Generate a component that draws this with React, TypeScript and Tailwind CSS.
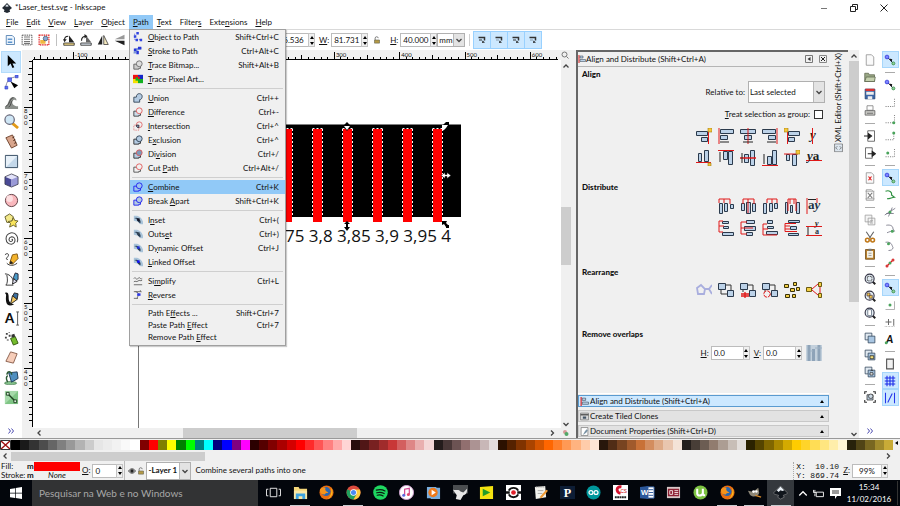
import type { ReactNode } from 'react';

type IconProps = { children: ReactNode; size?: string; box?: number };

function Svg({ children, size = 'size-4', box = 16 }: IconProps) {
  return (
    <svg viewBox={`0 0 ${box} ${box}`} className={`${size} shrink-0`} fill="none" aria-hidden="true">
      {children}
    </svg>
  );
}

// "_File" underlines the F
function Mnemonic({ text }: { text: string }) {
  const i = text.indexOf('_');
  if (i < 0) return <>{text}</>;
  return (
    <>
      {text.slice(0, i)}
      <span className="underline">{text[i + 1]}</span>
      {text.slice(i + 2)}
    </>
  );
}

function Chevron({ d, className = 'size-2' }: { d: string; className?: string }) {
  return (
    <svg viewBox="0 0 8 8" className={className} fill="none" stroke="#444" strokeWidth="1.3" aria-hidden="true">
      <path d={d} />
    </svg>
  );
}

const UP = 'M1.5 5.5 4 3l2.5 2.5';
const DOWN = 'M1.5 3 4 5.5 6.5 3';
const LEFT = 'M5.5 1.5 3 4l2.5 2.5';
const RIGHT = 'M3 1.5 5.5 4 3 6.5';

/* ---------- menu ---------- */

type MenuEntry = { label: string; keys?: string; icon?: ReactNode; active?: boolean; short?: boolean } | null;

const overlap = (a: string, b: string, fa: string, fb: string) => (
  <>
    <path d="M1 5h5v-1h3v6H7v1H1z" fill={fa} stroke={a} />
    <circle cx="7.5" cy="4.5" r="3.5" fill={fb} stroke={b} />
  </>
);

const offset = (accent: string) => (
  <>
    <path d="M1 1h4c4 1 6 4 7 7v3H9L6 8 1 7z" fill="#a9c4da" />
    <path d="M2 4c3 0 5 2 6 6" stroke="#57708a" />
    <path d="m3 3 3 1 3 3v3L6 8 5 6z" fill="#2a3c50" />
    <path d="M5 4h3v3H5z" fill={accent} />
  </>
);

const pathMenu: MenuEntry[] = [
  {
    label: '_Object to Path',
    keys: 'Shift+Ctrl+C',
    icon: (
      <>
        <path d="M2 2v7h7" stroke="#6b7ad0" strokeDasharray="2 1" />
        <path d="M4 0h3v3H4zM1 4h3v3H1zM3 8h3v3H3zM8 8h3v3H8z" fill="#3044e0" />
      </>
    ),
  },
  {
    label: '_Stroke to Path',
    keys: 'Ctrl+Alt+C',
    icon: (
      <>
        <path d="M2 9c0-4 3-6 8-6" stroke="#7b95d8" strokeWidth="3" />
        <path d="M1 3h3v3H1zM6 1h4v3H6zM4 6h3v4H4z" fill="#2534d8" />
      </>
    ),
  },
  { label: '_Trace Bitmap...', keys: 'Shift+Alt+B', icon: overlap('#555', '#666', '#ccc', '#ddd') },
  {
    label: '_Trace Pixel Art...',
    icon: (
      <>
        <path d="M0 1h6v5H0z" fill="#f01010" />
        <path d="M6 1h6v5H6z" fill="#1526c8" />
        <path d="M0 6h6v5H0z" fill="#f5e000" />
        <path d="M6 6h6v5H6z" fill="#12b020" />
        <path d="M3 4h3v4H3z" fill="#12b020" />
        <path d="M6 3h2v3H6z" fill="#f01010" />
      </>
    ),
  },
  null,
  {
    label: '_Union',
    keys: 'Ctrl++',
    icon: <path d="M1 5h3c0-6 7-5 7-1 0 2-1 4-3 4v3H1z" fill="#b4cbe2" stroke="#26384c" />,
  },
  { label: '_Difference', keys: 'Ctrl+-', icon: overlap('#333', '#e05050', '#cddcea', '#f0f0f0') },
  {
    label: '_Intersection',
    keys: 'Ctrl+^',
    icon: (
      <>
        <path d="M1 5h6v6H1z" stroke="#e06060" strokeDasharray="1 1" />
        <circle cx="7.5" cy="4.5" r="3.5" stroke="#e06060" />
        <path d="M4 5h3v3c-2 0-3-1-3-3z" fill="#8da9c4" stroke="#223" />
      </>
    ),
  },
  { label: 'E_xclusion', keys: 'Ctrl+^', icon: overlap('#222', '#26384c', '#b4cbe2', '#b4cbe2') },
  { label: 'Di_vision', keys: 'Ctrl+/', icon: overlap('#222', '#e05050', '#b4cbe2', '#7f9ab8') },
  { label: 'Cut _Path', keys: 'Ctrl+Alt+/', icon: overlap('#444', '#e05050', 'none', '#f0f0f0') },
  null,
  { label: '_Combine', keys: 'Ctrl+K', active: true, icon: overlap('#1414f0', '#1414f0', '#9cc4ee', '#9cc4ee') },
  { label: 'Break _Apart', keys: 'Shift+Ctrl+K', icon: overlap('#1414f0', '#1414f0', '#b4cbe2', '#b4cbe2') },
  null,
  { label: 'I_nset', keys: 'Ctrl+(', icon: offset('#112') },
  { label: 'Outs_et', keys: 'Ctrl+)', icon: offset('#345') },
  { label: 'D_ynamic Offset', keys: 'Ctrl+J', icon: offset('#2030e0') },
  { label: '_Linked Offset', icon: offset('#1010ff') },
  null,
  {
    label: 'Si_mplify',
    keys: 'Ctrl+L',
    icon: <path d="M1 3c2-3 3 3 5 0s3 2 5 0M1 7c2-2 3 1 5-1s3 1 5-1M1 10.500h10" stroke="#555" />,
  },
  {
    label: '_Reverse',
    icon: (
      <>
        <path d="M1 2h9L8 0M3 2c6 2 3 4 2 8M1 10h5" stroke="#555" />
        <path d="M5 4h4v3H5z" fill="#2a35e8" />
      </>
    ),
  },
  null,
  { label: 'Path E_ffects ...', keys: 'Shift+Ctrl+7', short: true },
  { label: 'Paste Path _Effect', keys: 'Ctrl+7', short: true },
  { label: 'Remove Path _Effect', short: true },
];

function PathMenu() {
  return (
    <div
      role="menu"
      className="absolute left-0 top-full z-10 w-[157px] border border-[#a0a0a0] bg-[#f0f0f0] pb-0.5 shadow-[1px_1px_1px_#0003]"
    >
      {pathMenu.map((m, i) =>
        m === null ? (
          <div key={i} role="separator" className="flex h-[5px] items-center px-0.5">
            <div className="h-px w-full bg-[#cfcfcf]" />
          </div>
        ) : (
          <button
            key={i}
            role="menuitem"
            className={`flex w-full items-center pl-[3px] pr-1.5 text-left ${m.short ? 'h-3' : 'h-[14px]'} ${
              m.active ? 'bg-[#91c9f7]' : ''
            }`}
          >
            <span className="w-[15px] shrink-0">
              {m.icon && (
                <Svg size="size-[10px]" box={12}>
                  {m.icon}
                </Svg>
              )}
            </span>
            <span className="flex-1">
              <Mnemonic text={m.label} />
            </span>
            <span>{m.keys}</span>
          </button>
        ),
      )}
    </div>
  );
}

const menus = ['_File', '_Edit', '_View', '_Layer', '_Object', '_Path', '_Text', 'Filter_s', 'Exte_nsions', '_Help'];

function MenuBar() {
  return (
    <nav className="flex h-[14px] shrink-0 pl-0.5">
      {menus.map((m) => (
        <div key={m} className="relative">
          <button className={`h-full px-1 ${m === '_Path' ? 'bg-[#91c9f7]' : ''}`}>
            <Mnemonic text={m} />
          </button>
          {m === '_Path' && <PathMenu />}
        </div>
      ))}
    </nav>
  );
}

/* ---------- tool controls ---------- */

function Spin({ label, value, width }: { label: string; value: string; width: string }) {
  return (
    <label className="flex items-center gap-0.5">
      <span>
        <Mnemonic text={label} />
      </span>
      <span className={`flex h-[14px] ${width}`}>
        <input
          defaultValue={value}
          className="h-full w-0 min-w-0 flex-1 border border-r-0 border-[#bcbcbc] bg-white pl-0.5 outline-none"
        />
        <span className="flex w-[7px] flex-col border border-[#c4c4c4] bg-[#f0f0f0]">
          <button aria-label="Increase" className="flex flex-1 items-center justify-center">
            <svg viewBox="0 0 4 3" className="h-[3px] w-1"><path d="M0 3 2 0l2 3z" /></svg>
          </button>
          <button aria-label="Decrease" className="flex flex-1 items-center justify-center">
            <svg viewBox="0 0 4 3" className="h-[3px] w-1"><path d="M0 0h4L2 3z" /></svg>
          </button>
        </span>
      </span>
    </label>
  );
}

function Combo({ label, value, className }: { label: string; value: string; className: string }) {
  return (
    <span className={`flex border border-[#b0b0b0] bg-white ${className}`}>
      <select aria-label={label} className="min-w-0 flex-1 appearance-none pl-px outline-none">
        <option>{value}</option>
      </select>
      <span className="flex w-[11px] items-center justify-center border-l border-[#b8b8b8] bg-[#e3e3e3]">
        <Chevron d={DOWN} />
      </span>
    </span>
  );
}

const padlock = (
  <>
    <path d="M5 8V5c0-3 5-3 5 0" stroke="#777" strokeWidth="1.500" />
    <path d="M4 8h8v5H4z" fill="#b59a45" stroke="#665" />
  </>
);

const controlIcons: { name: string; art: ReactNode }[] = [
  {
    name: 'Select all',
    art: (
      <>
        <path d="M3 2h8l3 3v9H3z" fill="#eef5fc" stroke="#3a6ea5" />
        <path d="M5 6h6v2H5zM5 10h6v2H5z" fill="#5b93cc" />
      </>
    ),
  },
  {
    name: 'Select all in all layers',
    art: (
      <>
        <path d="M1.500 1.500h13v13h-13z" stroke="#222" strokeDasharray="2 1" />
        <path d="M4 4h8M4 7h8M4 10h8M4 12.500h8" stroke="#777" strokeWidth="1.500" />
      </>
    ),
  },
  {
    name: 'Deselect',
    art: (
      <>
        <path d="M1.500 1.500h13v13h-13z" stroke="#e02020" strokeWidth="1.500" strokeDasharray="2 1" />
        <path d="M3 8h7v5H3z" fill="#f0b840" />
        <circle cx="10" cy="6" r="3" fill="#88a8d8" stroke="#456" />
      </>
    ),
  },
];

const rotateIcons: { name: string; art: ReactNode }[] = [
  {
    name: 'Rotate left',
    art: (
      <>
        <path d="M8 2v9h7z" fill="#222" />
        <path d="M1 12h14v3H1z" fill="#f2d98a" stroke="#222" />
        <path d="M2 8c0-3 2-5 5-5" stroke="#222" strokeWidth="1.500" />
        <path d="m0 7 5 0-3 4z" fill="#222" />
      </>
    ),
  },
  {
    name: 'Rotate right',
    art: (
      <>
        <path d="M8 2v9h7z" fill="#666" />
        <path d="M1 12h14v3H1z" fill="#d4dce4" stroke="#222" />
        <path d="M2 9c0-4 2-6 6-6" stroke="#222" strokeWidth="1.500" />
        <path d="m6 0 4 3-4 3z" fill="#222" />
      </>
    ),
  },
  {
    name: 'Flip horizontal',
    art: (
      <>
        <path d="M7 2v12H1z" fill="#222" />
        <path d="M9 2v12h6z" fill="#f5e9c0" stroke="#333" />
      </>
    ),
  },
  {
    name: 'Flip vertical',
    art: (
      <>
        <path d="M14 1v6H1z" fill="#999" />
        <path d="M14 15V9H1z" fill="#222" />
      </>
    ),
  },
];

function ControlsBar() {
  return (
    <div className="flex h-[21px] shrink-0 items-center border-t border-[#d9d9d9]">
      <div className="flex w-[269px] shrink-0 items-center gap-[5px] pl-1">
        {controlIcons.map((c) => (
          <button key={c.name} aria-label={c.name}>
            <Svg size="size-3">{c.art}</Svg>
          </button>
        ))}
        <div className="mx-px h-3 w-px bg-[#c0c0c0]" />
        {rotateIcons.map((c) => (
          <button key={c.name} aria-label={c.name}>
            <Svg size="size-3">{c.art}</Svg>
          </button>
        ))}
      </div>
      <Spin label="" value="276.536" width="w-11" />
      <div className="w-1" />
      <Spin label="_W:" value="81.731" width="w-[37px]" />
      <button aria-label="Lock ratio" className="ml-1 mr-2">
        <Svg size="size-2.5">{padlock}</Svg>
      </button>
      <Spin label="_H:" value="40.000" width="w-[37px]" />
      <Combo label="Units" value="mm" className="h-[14px] w-7" />
      <div className="mx-1 h-3 w-px bg-[#d0d0d0]" />
      <div className="flex">
        {['stroke width', 'rounded corners', 'gradients', 'patterns'].map((t, i) => (
          <button
            key={t}
            aria-label={`Scale ${t}`}
            className="-ml-px flex h-[18px] w-[18px] items-center justify-center border border-[#99d1ff] bg-[#cce8ff]"
          >
            <Svg size="size-2">
              <path d="M1 3h12v6" stroke="#333" strokeWidth="3" />
              <path d="M2 8h6" stroke={i % 2 ? '#89a' : '#333'} strokeWidth="2" />
              <path d="m8 14 6-1-5-4z" fill="#222" />
            </Svg>
          </button>
        ))}
      </div>
    </div>
  );
}

/* ---------- toolbox ---------- */

const tools: { name: string; art: ReactNode }[] = [
  { name: 'Select', art: <path d="M4 1v12l3-3 2 5 2-1-2-4h4z" fill="#000" /> },
  {
    name: 'Edit paths',
    art: (
      <>
        <path d="M2 14C2 7 6 2 14 2" stroke="#889" />
        <path d="M1 12h3v3H1zM4 3h4v4H4zM12 0h3v3h-3z" fill="#5c6cf0" stroke="#2233c0" strokeWidth=".6" />
        <path d="m7 7 8 4-4 3z" fill="#000" />
      </>
    ),
  },
  {
    name: 'Tweak',
    art: (
      <>
        <path d="M1 15v-3c4 0 3-9 8-10 3 0 5 2 4 4-2-2-5 0-4 3 1 2 3 3 6 3v3z" fill="#8b8f8b" />
        <path d="M2 12c4-1 4-9 8-9M5 13c3-2 2-6 4-7" stroke="#444" />
      </>
    ),
  },
  {
    name: 'Zoom',
    art: (
      <>
        <path d="m9 10 6 5" stroke="#e29a18" strokeWidth="3" />
        <circle cx="6" cy="6" r="5" fill="#cfe6f5" stroke="#667" strokeWidth="1.300" />
      </>
    ),
  },
  {
    name: 'Measure',
    art: (
      <>
        <path d="m2 4 7-3 5 11-6 3z" fill="#d8a58c" stroke="#70442f" />
        <path d="m9 4 2-1M10 7l2-1M11 10l2-1" stroke="#402010" />
      </>
    ),
  },
  {
    name: 'Rectangle',
    art: (
      <>
        <path d="M1.500 1.500h13v13h-13z" fill="#c4d8ea" stroke="#334a60" />
        <path d="M2 2h12L2 14z" fill="#e8f1f9" />
      </>
    ),
  },
  {
    name: '3D box',
    art: (
      <>
        <path d="m1 4 7-3 7 3-7 4z" fill="#e3e3fa" />
        <path d="m1 4 7 3v8l-7-3z" fill="#4a4a96" />
        <path d="m8 7 7-3v8l-7 3z" fill="#9a9ad8" />
        <path d="m1 4 7-3 7 3v8l-7 3-7-3z" stroke="#334" strokeWidth=".8" />
      </>
    ),
  },
  {
    name: 'Ellipse',
    art: (
      <>
        <circle cx="8" cy="8" r="6.500" fill="#f9b8bd" stroke="#5c3a3f" />
        <circle cx="6" cy="6" r="3.500" fill="#fddfe1" />
      </>
    ),
  },
  {
    name: 'Star',
    art: (
      <>
        <path d="m1 4 5-3 4 3-2 6H3z" fill="#f3e98a" stroke="#66602c" />
        <path d="m10 5 1.500 3 3.500.5-2.500 2.500.5 4-3-2-4 2 1-4-2.500-2 4-.5z" fill="#f8e45c" stroke="#66602c" />
      </>
    ),
  },
  {
    name: 'Spiral',
    art: (
      <path
        d="M8 8c1-1 2 1 0 2-3 1-4-4 0-5 5 0 5 7 0 8-7 0-8-10-1-12 6-1 9 5 7 10"
        stroke="#444"
        strokeWidth="1.100"
      />
    ),
  },
  {
    name: 'Pencil',
    art: (
      <>
        <path d="M1 3c3-3 5 0 3 2s-2 3 0 3M3 12c3 3 7 3 11 0" stroke="#333" />
        <path d="m6 12 3-9 5-1 1 5-6 6z" fill="#f3b32c" stroke="#805510" />
        <path d="m6 13 1-4 3 3z" fill="#222" />
      </>
    ),
  },
  {
    name: 'Bezier',
    art: (
      <>
        <path d="M1 2c4 0 8 3 9 8M3 3c1 5 1 9-1 11h8" stroke="#333" />
        <path d="m10 6 2-5 3 1v6l-3 2z" fill="#4b9bc8" stroke="#223" />
        <path d="m9 13 1-6 4 3z" fill="#dde" stroke="#222" />
      </>
    ),
  },
  {
    name: 'Calligraphy',
    art: (
      <>
        <path d="M1 2c4-2 4 3 4 6s2 6 6 6c-6 3-9 1-9-6 0-3 1-4-1-6z" fill="#111" />
        <path d="m9 6 2-4 4 1-1 6z" fill="#3c6f9e" stroke="#222" />
        <path d="m7 14 2-9 5 4z" fill="#f1c760" stroke="#222" />
      </>
    ),
  },
  {
    name: 'Text',
    art: (
      <>
        <path d="M14.500 1v14M13 1h3M13 15h3" stroke="#555" />
        <text x="1" y="13" fontSize="14" fontWeight="900" fontFamily="Lato" fill="#111">
          A
        </text>
      </>
    ),
  },
  {
    name: 'Spray',
    art: (
      <>
        <path d="M2 2h2v2H2zM5 4h2v2H5zM1 6h2v2H1zM5 1h1v1H5zM3 9h2v1H3z" fill="#444" />
        <path d="m7 8 5-2 3 7-5 2z" fill="#74bc2c" stroke="#335a10" />
        <path d="m8 4 3-1 1 3-4 1z" fill="#333" />
      </>
    ),
  },
  { name: 'Eraser', art: <path d="m2 12 5-10 7 2-4 10z" fill="#f6cdb9" stroke="#8a5f4d" /> },
  {
    name: 'Paint bucket',
    art: (
      <>
        <ellipse cx="7" cy="14" rx="6.500" ry="1.800" fill="#83c08a" stroke="#2d6636" strokeWidth=".6" />
        <path d="m5 3 9-1 1 7-7 4z" fill="#4f8fc0" stroke="#1d3a55" />
        <path d="M4 6c-3 2-1 5 0 7M3 5c1-5 6-3 5 0" stroke="#2d5a36" strokeWidth="1.500" />
      </>
    ),
  },
  {
    name: 'Connector',
    art: (
      <>
        <path d="M1 1h14v14H1z" fill="#7fc585" />
        <path d="M1 1h14L1 15z" fill="#a5d9a9" />
        <path d="M4 4 12 12" stroke="#1b3f1e" strokeWidth="1.500" />
        <path d="M2.500 2.500h3v3h-3zM10.500 10.500h3v3h-3z" fill="#dcefdd" stroke="#1b3f1e" />
      </>
    ),
  },
];

function More() {
  return (
    <button aria-label="More">
      <svg viewBox="0 0 6 6" className="size-1.5" fill="none" stroke="#4a4ab0">
        <path d="m.5.5 2 2.500-2 2.500M3.500.5l2 2.500-2 2.500" />
      </svg>
    </button>
  );
}

function Toolbox() {
  return (
    <aside className="flex w-[22px] shrink-0 flex-col items-center bg-white pt-px">
      <div className="flex h-[356px] flex-col">
        {tools.map((t, i) => (
          <button
            key={t.name}
            aria-label={t.name}
            className={`flex min-h-0 w-5 flex-1 items-center justify-center ${
              i === 0 ? 'border border-[#b4dcfb] bg-[#cce8ff]' : ''
            }`}
          >
            <Svg size="size-[15px]">{t.art}</Svg>
          </button>
        ))}
      </div>
      <div className="mb-1 mt-auto flex">
        <More />
      </div>
    </aside>
  );
}

/* ---------- rulers and canvas ---------- */

const STEP = 0.653; // px per mm at 99%

function HorizontalRuler() {
  const ticks = Array.from({ length: 81 }, (_, i) => -160 + i * 10);
  return (
    <svg className="h-[10px] min-w-0 flex-1" aria-hidden="true">
      <path d="M0 9.500h525" stroke="#000" />
      {ticks.map((v) => {
        const x = Math.round(105 + v * STEP) + 0.5;
        const h = v % 100 === 0 ? 7 : v % 50 === 0 ? 4 : 2;
        return x < 525 && <path key={v} d={`M${x} 9V${9 - h}`} stroke="#000" />;
      })}
      {[-100, 300, 400, 500, 600].map((v) => (
        <text key={v} x={107 + v * STEP} y="7" fontSize="6" fill="#111">
          {v}
        </text>
      ))}
    </svg>
  );
}

function VerticalRuler() {
  const ticks = Array.from({ length: 57 }, (_, i) => 870 - i * 10);
  return (
    <svg className="w-[11px] shrink-0" aria-hidden="true">
      <path d="M10.500 0v367" stroke="#000" />
      {ticks.map((v) => {
        const y = Math.round(47 + (800 - v) * STEP) + 0.5;
        const w = v % 100 === 0 ? 8 : v % 50 === 0 ? 4 : 3;
        return y < 367 && <path key={v} d={`M10 ${y}h${-w}`} stroke="#000" />;
      })}
      {[800, 700, 600, 500, 400].map((v) =>
        String(v)
          .split('')
          .map((c, i) => (
            <text key={`${v}-${i}`} x="2" y={53 + (800 - v) * STEP + i * 6} fontSize="6" fill="#111">
              {c}
            </text>
          )),
      )}
    </svg>
  );
}

const bars = [220, 250, 280, 310, 340, 370, 400];

function Canvas() {
  return (
    <svg className="min-w-0 flex-1 bg-white" role="img" aria-label="Drawing">
      <path d="M105.500 0v400" stroke="#777" />
      <path d="M150 64.500h278V157H150z" fill="#000" />
      {bars.map((x) => (
        <g key={x}>
          <path d={`M${x} 69h9v93h-9z`} fill="#f00" />
          <path d={`M${x - 0.5} 68.500h10M${x - 0.5} 69v88M${x + 9.5} 69v88`} stroke="#fff" strokeDasharray="2 2" />
        </g>
      ))}
      <text x="252" y="182" fontSize="17" fill="#111" fontFamily="Open Sans, sans-serif">
        75 3,8 3,85 3,9 3,95 4
      </text>
      {/* selection handles */}
      <path d="m314 62 3 3h-2v2h2l-3 4-3-4h2v-2h-2z" fill="#000" />
      <path d="M311 66h6l-3 4z" fill="#fff" />
      <path d="m410 65 3-3h3v3l-3 2z" fill="#000" />
      <path d="M409 71v-6l6 0-2 3-2 2z" fill="#fff" />
      <path d="m408 115.500 4-3v2h2v-2l4 3-4 3v-2h-2v2z" fill="#fff" stroke="#000" strokeWidth=".5" />
      <path d="m314 161 3 3h-2v3h2l-3 4-3-4h2v-3h-2z" fill="#000" />
      <path d="M409 161h5l-1 2 2 2h1v3h-3v-1l-2-3-2 1z" fill="#000" />
    </svg>
  );
}

function Desk() {
  return (
    <main className="flex min-w-0 flex-1 flex-col">
      <div className="flex h-[10px] shrink-0">
        <div className="w-[11px]" />
        <HorizontalRuler />
        <button aria-label="Zoom on resize" className="w-[10px]">
          <Svg size="size-2">
            <circle cx="7" cy="7" r="5" stroke="#777" strokeWidth="2" />
            <path d="m11 11 4 4" stroke="#777" strokeWidth="2" />
          </Svg>
        </button>
      </div>
      <div className="flex min-h-0 flex-1">
        <VerticalRuler />
        <Canvas />
        <div className="flex w-[10px] flex-col items-center pt-0.5">
          <Chevron d={UP} />
          <div className="h-[137px]" />
          <div className="h-[58px] w-full bg-[#cdcdcd]" />
          <div className="flex-1" />
          <Chevron d={DOWN} />
        </div>
      </div>
      <div className="flex h-[10px] shrink-0 items-center pl-[13px]">
        <Chevron d={LEFT} />
        <div className="flex h-full flex-1 pl-[140px]">
          <div className="h-full w-[174px] bg-[#cdcdcd]" />
        </div>
        <Chevron d={RIGHT} />
        <button aria-label="Color managed view" className="ml-1.5 mr-px">
          <Svg size="size-2">
            <circle cx="6" cy="6" r="4" fill="#d89a9a" />
            <circle cx="9" cy="10" r="4" fill="#54a868" />
          </Svg>
        </button>
      </div>
    </main>
  );
}

/* ---------- dock ---------- */

const bar = { fill: '#bcd2e8', stroke: '#2b3a4c' };
const red = '#e01818';
const anchor = <path d="M12 0h4v4h-4z" fill="#f6c73a" stroke="#a07a10" strokeWidth=".6" />;

const alignIcons: { name: string; art: ReactNode }[] = [
  { name: 'Align right edges to left of anchor', art: <><path d="M.5 3.500h11v4H.5zM5.500 9.500h6v4h-6z" {...bar} /><path d="M12.500 4v12" stroke={red} />{anchor}</> },
  { name: 'Align left edges', art: <><path d="M2.500 1.500h13v4h-13zM2.500 7.500h7v4h-7z" {...bar} /><path d="M1 0v16" stroke={red} /><path d="M2 14h9" stroke="#222" /></> },
  { name: 'Center on vertical axis', art: <><path d="M.5 1.500h15v4H.5zM4.500 7.500h7v4h-7z" {...bar} /><path d="M8 0v16" stroke={red} /><path d="M3 14h10" stroke="#222" /></> },
  { name: 'Align right sides', art: <><path d="M.5 1.500h13v4H.5zM6.500 7.500h7v4h-7z" {...bar} /><path d="M15 0v16" stroke={red} /><path d="M5 14h9" stroke="#222" /></> },
  { name: 'Align left edges to right of anchor', art: <><path d="M4.500 3.500h11v4h-11zM4.500 9.500h6v4h-6z" {...bar} /><path d="M3.500 4v12" stroke={red} /><path d="M0 0h4v4H0z" fill="#f6c73a" stroke="#a07a10" strokeWidth=".6" /></> },
  { name: 'Align baseline anchors vertically', art: <><text x="4" y="11" fontSize="13" fontStyle="italic" fontWeight="700" fontFamily="Liberation Serif" fill="#222">y</text><path d="M6.500 0v16" stroke={red} /></> },
  { name: 'Align bottom edges to top of anchor', art: <><path d="M2.500 3.500h3v8h-3zM8.500.5h4v11h-4z" {...bar} /><path d="M0 12.500h15" stroke={red} /><path d="M12 13h3v3h-3z" fill="#f6c73a" stroke="#a07a10" strokeWidth=".6" /></> },
  { name: 'Align top edges', art: <><path d="M5.500 1.500h4v8h-4zM10.500 1.500h4v13h-4z" {...bar} /><path d="M0 .5h16" stroke={red} /><path d="M2 2v10" stroke="#222" /></> },
  { name: 'Center on horizontal axis', art: <><path d="M4.500 4.500h4v8h-4zM10.500.5h4v15h-4z" {...bar} /><path d="M0 8h16" stroke={red} strokeWidth="1.500" /><path d="M2 3v10" stroke="#222" /></> },
  { name: 'Align bottom edges', art: <><path d="M5.500 6.500h4v8h-4zM10.500.5h4v14h-4z" {...bar} /><path d="M0 15.500h16" stroke={red} /><path d="M2 4v10" stroke="#222" /></> },
  { name: 'Align top edges to bottom of anchor', art: <><path d="M2.500 4.500h3v6h-3zM8.500 4.500h4v11h-4z" {...bar} /><path d="M0 4h14" stroke={red} />{anchor}</> },
  { name: 'Align baselines', art: <><path d="M0 10.500h16" stroke={red} /><text x="1" y="10" fontSize="13" fontWeight="700" fontFamily="Liberation Serif" fill="#222"><tspan fontStyle="italic">y</tspan>a</text></> },
];

const distIcons: { name: string; art: ReactNode }[] = [
  { name: 'Distribute left edges', art: <><path d="M1.500 5.500h3v10h-3zM6.500 5.500h3v8h-3zM12.500 6.500h3v4h-3z" {...bar} /><path d="M1 5V1h11v5M6 1v4" stroke={red} /></> },
  { name: 'Distribute centers horizontally', art: <><path d="M1.500 5.500h3v7h-3zM6.500 4.500h4v11h-4zM12.500 5.500h3v8h-3z" {...bar} /><path d="M3 6V1h11v5M8 1v14" stroke={red} /></> },
  { name: 'Distribute right edges', art: <><path d="M1.500 5.500h3v10h-3zM7.500 5.500h3v8h-3zM12.500 5.500h3v5h-3z" {...bar} /><path d="M5 5V1h10v4M10 1v4" stroke={red} /></> },
  { name: 'Make horizontal gaps equal', art: <><path d="M1.500 4.500h2v11h-2zM6.500 7.500h2v7h-2zM12.500 4.500h3v11h-3z" {...bar} /><path d="M4 1v12M6 1v5M10 1v5M12 1v12M4 1h8" stroke={red} /></> },
  { name: 'Distribute baseline anchors horizontally', art: <><text x="2" y="11" fontSize="13" fontWeight="700" fontFamily="Liberation Serif" fill="#234">a<tspan fontStyle="italic">y</tspan></text><path d="M1 0v16M11 0v5" stroke={red} /><path d="M2 1.500h8" stroke="#222" /></> },
  { name: 'Distribute top edges', art: <><path d="M4.500 1.500h6v2h-6zM5.500 6.500h5v2h-5zM4.500 12.500h11v3h-11z" {...bar} /><path d="M5 1H1v11h4M1 6h5" stroke={red} /></> },
  { name: 'Distribute centers vertically', art: <><path d="M6.500.5h8v3h-8zM4.500 6.500h11v4h-11zM6.500 12.500h6v3h-6z" {...bar} /><path d="M7 2H1v12h6M1 8h12" stroke={red} /></> },
  { name: 'Distribute bottom edges', art: <><path d="M5.500.5h5v3h-5zM5.500 6.500h6v2h-6zM4.500 11.500h11v3h-11z" {...bar} /><path d="M5 4H1v11h14M1 9h5" stroke={red} /></> },
  { name: 'Make vertical gaps equal', art: <><path d="M4.500.5h11v2h-11zM6.500 6.500h6v3h-6zM4.500 13.500h10v2h-10z" {...bar} /><path d="M12 3.500H1v8h12M1 6h5M1 9h5" stroke={red} /></> },
  { name: 'Distribute baselines vertically', art: <><path d="M0 6.500h16M0 15.500h16" stroke={red} /><path d="M2 7v8" stroke="#222" /><text x="9" y="6" fontSize="8" fontStyle="italic" fontWeight="700" fontFamily="Liberation Serif" fill="#222">y</text><text x="9" y="14" fontSize="8" fontWeight="700" fontFamily="Liberation Serif" fill="#234">a</text></> },
];

const swap = (
  <>
    <path d="M.5 1.500h7v6h-7zM9.500 8.500h6v6h-6z" {...bar} />
    <path d="M8 3h5v5M3 8v4h6" stroke="#333" />
  </>
);

const rearrangeIcons: { name: string; art: ReactNode }[] = [
  { name: 'Arrange connector network', art: <path d="m1 6 4-3 4 4-1 5H2zM9 7h4l3-4M13 7l3 5" stroke="#a9aede" strokeWidth="1.800" /> },
  { name: 'Exchange positions', art: swap },
  { name: 'Exchange in stacking order', art: <>{swap}<path d="M1 10h8v6H1z" fill="#f0f0f0" /><path d="M1 12h8M1 14h8M5 10v6" stroke={red} strokeWidth="1.300" /></> },
  { name: 'Exchange around center', art: <>{swap}<circle cx="5" cy="12" r="3.200" fill="#f0f0f0" stroke={red} strokeDasharray="4 1" /></> },
  { name: 'Randomize centers', art: <g fill="#f3cf45" stroke="#3a3208"><path d="M.5 2.500h4v3h-4zM9.500.5h3v3h-3zM6.500 6.500h4v3h-4zM12.500 5.500h3v3h-3zM1.500 12.500h4v3h-4zM8.500 12.500h3v3h-3z" /></g> },
  { name: 'Unclump objects', art: <><path d="m6 7 6-5M6 8l6 5M14 4v7" stroke={red} /><g fill="#f3cf45" stroke="#6b5b10"><path d="M.5 5.500h5v4h-5zM12.500.5h3v4h-3zM12.500 11.500h3v4h-3z" /></g></> },
];

function IconGrid({ items, cols }: { items: { name: string; art: ReactNode }[]; cols: string }) {
  return (
    <div className={`ml-auto mr-[7px] grid w-fit gap-1.5 ${cols}`}>
      {items.map((it) => (
        <button key={it.name} aria-label={it.name}>
          <Svg>{it.art}</Svg>
        </button>
      ))}
    </div>
  );
}

const alignGlyph = (
  <>
    <path d="M2 0v16" stroke={red} strokeWidth="2" />
    <path d="M4 2h6v4H4zM4 9h11v4H4z" {...bar} />
  </>
);

function DockTab({ text, art, active }: { text: string; art: ReactNode; active?: boolean }) {
  return (
    <button
      className={`flex h-3 w-full items-center gap-px border pl-px pr-1 text-left ${
        active ? 'border-[#5a9bd0] bg-[#cce8ff]' : 'border-[#c8c8c8] bg-[#e2e2e2]'
      }`}
    >
      <Svg size="size-[9px]">{art}</Svg>
      <span className="flex-1">{text}</span>
      <svg viewBox="0 0 4 3" className="h-[3px] w-1"><path d="M0 3 2 0l2 3z" /></svg>
    </button>
  );
}

function Dock() {
  return (
    <section className="flex w-[253px] shrink-0 flex-col border-l-2 border-t-2 border-[#666]">
      <header className="flex h-[15px] shrink-0 items-center border-b border-[#b5b5b5] pr-0.5">
        <Svg size="size-2">{alignGlyph}</Svg>
        <span className="flex-1">Align and Distribute (Shift+Ctrl+A)</span>
        <button aria-label="Iconify" className="mr-1.5 size-2">
          <Svg size="size-2" box={8}>
            <path d="M.5.5h7v7h-7z" stroke="#777" />
            <path d="M5.500 2v4l-3-2z" fill="#333" />
          </Svg>
        </button>
        <button aria-label="Close" className="size-2">
          <Svg size="size-2" box={8}>
            <path d="M.5.5h7v7h-7z" stroke="#888" />
            <path d="m2 2 4 4M6 2 2 6" stroke="#222" />
          </Svg>
        </button>
      </header>
      <div className="flex-1">
        <h2 className="mt-0.5 pl-1 font-black">Align</h2>
        <div className="mr-1 mt-px flex items-center justify-end gap-[3px]">
          <span>Relative to:</span>
          <Combo label="Relative to" value="Last selected" className="h-[22px] w-[77px]" />
        </div>
        <label className="mr-1.5 mt-[5px] flex h-3 items-center justify-end gap-1">
          <span>
            <Mnemonic text="_Treat selection as group:" />
          </span>
          <input type="checkbox" className="size-[9px] appearance-none border border-[#333] bg-white" />
        </label>
        <div className="h-2" />
        <IconGrid items={alignIcons} cols="grid-cols-6" />
        <h2 className="mt-4 pl-1 font-black">Distribute</h2>
        <div className="h-[5px]" />
        <IconGrid items={distIcons} cols="grid-cols-5" />
        <h2 className="mt-[31px] pl-1 font-black">Rearrange</h2>
        <div className="h-1" />
        <IconGrid items={rearrangeIcons} cols="grid-cols-6" />
        <h2 className="mt-[31px] pl-1 font-black">Remove overlaps</h2>
        <div className="mr-[7px] mt-[5px] flex items-center justify-end gap-1">
          <Spin label="_H:" value="0.0" width="w-[39px]" />
          <Spin label="_V:" value="0.0" width="w-[39px]" />
          <button aria-label="Remove overlaps">
            <Svg>
              <path d="M0 0h16v16H0z" fill="#c3d0dc" />
              <path d="M3 0v16M7.500 4v12M13 0v16" stroke="#8ea3b8" strokeWidth="3" />
              <path d="M4 6h3M9 3h7" stroke="#9fb2c4" />
            </Svg>
          </button>
        </div>
      </div>
      <div className="flex flex-col gap-[3px] border-t border-white pb-px pt-px">
        <DockTab active text="Align and Distribute (Shift+Ctrl+A)" art={alignGlyph} />
        <DockTab
          text="Create Tiled Clones"
          art={
            <>
              <path d="M1 2h14v12H1z" fill="#ddd" stroke="#555" />
              <path d="M1 5h14" stroke="#333" strokeWidth="2" />
              <path d="M5 8h6v4H5z" fill="#456" />
            </>
          }
        />
        <DockTab
          text="Document Properties (Shift+Ctrl+D)"
          art={
            <>
              <path d="M2 1h12v14H2z" fill="#fff" stroke="#555" />
              <path d="m5 14 4-7 3-3 2 2-3 4z" fill="#7a93a5" />
            </>
          }
        />
      </div>
    </section>
  );
}

function DockSide() {
  return (
    <>
      <div className="w-[19px] shrink-0 border-t-2 border-[#666] pt-px">
        <button className="flex w-full rotate-180 items-center gap-px [writing-mode:vertical-rl]">
          <Svg size="size-[9px]">
            <path d="M1 1h14v14H1z" fill="#dde6ee" stroke="#444" />
            <path d="m6 5-3 3 3 3M10 5l3 3-3 3" stroke="#333" />
          </Svg>
          <span>XML Editor (Shift+Ctrl+X)</span>
        </button>
      </div>
      <div className="flex w-[11px] shrink-0 flex-col items-center pt-0.5">
        <Chevron d={UP} />
        <div className="mt-px h-[241px] w-[10px] bg-[#cdcdcd]" />
        <div className="flex-1" />
        <Chevron d={DOWN} />
      </div>
    </>
  );
}

/* ---------- command and snap bars ---------- */

const page = <path d="M3 1h7l3 3v11H3z" fill="#fafafa" stroke="#8a8a8a" />;
const lens = (
  <>
    <path d="m11 11 4 4" stroke="#222" strokeWidth="2.500" />
    <circle cx="7.500" cy="7.500" r="6" fill="#e4edf4" stroke="#334" strokeWidth="1.500" />
  </>
);
const stack = (
  <>
    <path d="M1.500 1.500h9v9h-9z" fill="#dfe8f0" stroke="#2d4257" />
    <path d="M5.500 5.500h9v9h-9z" fill="#a9c6e2" stroke="#2d4257" />
  </>
);

type BarItem = { name: string; art: ReactNode; on?: boolean } | null;

const commands: BarItem[] = [
  { name: 'New', art: page },
  { name: 'Open', art: <><path d="M1 3h5l1 2h7v9H1z" fill="#9aa886" stroke="#5c664d" /><path d="m1 14 2-6h12l-1 6z" fill="#c4d0ae" stroke="#5c664d" /></> },
  { name: 'Save', art: <><path d="M1.500 1.500h13v13h-13z" fill="#3a66a8" stroke="#24406e" /><path d="M2 1h12v3H2z" fill="#d83030" /><path d="M3 5h10v4H3zM5 11h6v4H5z" fill="#eee" /></> },
  { name: 'Print', art: <><path d="M4 1h8v6H4z" fill="#fff" stroke="#777" /><path d="M1.500 7.500h13v6h-13z" fill="#c8c8c4" stroke="#555" /><path d="M4 11h8" stroke="#555" /></> },
  null,
  { name: 'Import', art: <><path d="M5 1h9v14H5z" fill="#fff" stroke="#444" /><path d="M0 8h8M6 5l4 3-4 3z" fill="#222" stroke="#222" strokeWidth="1.500" /></> },
  { name: 'Export', art: <><path d="M2 1h9v14H2z" fill="#fff" stroke="#444" /><path d="M5 9h7M11 6l4 3-4 3z" fill="#222" stroke="#222" strokeWidth="1.500" /></> },
  null,
  { name: 'Undo', art: <>{page}<path d="m6 6 4 5M10 6l-4 5" stroke={red} strokeWidth="1.500" /></> },
  { name: 'Redo', art: <>{page}<path d="m5 5 6 7M11 5l-6 7" stroke="#777" strokeWidth="1.500" /><path d="M2 3h12M2 13h12" stroke="#999" /></> },
  null,
  { name: 'Copy', art: <g fill="#f4f4f4" stroke="#999"><path d="M1.500 1.500h9v9h-9zM5.500 5.500h9v9h-9z" /><path d="M8 9h4M8 12h4" /></g> },
  { name: 'Cut', art: <><path d="m3 1 6 9M13 1 7 10" stroke="#666" strokeWidth="1.500" /><circle cx="4.500" cy="12" r="2.500" stroke="#c07818" strokeWidth="2" /><circle cx="11.500" cy="12" r="2.500" stroke="#c07818" strokeWidth="2" /></> },
  { name: 'Paste', art: <><path d="M2 2h12v13H2z" fill="#b8802c" stroke="#6b4510" /><path d="M4 4h8v9H4z" fill="#f4f0e4" /><path d="M6 1h4v3H6z" fill="#777" /><path d="M6 7h4M6 10h4" stroke="#888" /></> },
  null,
  { name: 'Zoom selection', art: <>{lens}<path d="M4.500 4.500h6v6h-6z" stroke="#222" strokeDasharray="2 1" /></> },
  { name: 'Zoom drawing', art: <>{lens}<path d="M4 4h4v4H4zM7 7h4v4H7z" fill="#f1c64a" stroke="#544" /></> },
  { name: 'Zoom page', art: <>{lens}<path d="M5 3.500h5v8H5z" fill="#fff" stroke="#567" /></> },
  null,
  { name: 'Duplicate', art: stack },
  { name: 'Clone', art: <>{stack}<path d="M8 9h5v4H8z" fill="#f4e07c" stroke="#222" /></> },
  { name: 'Unlink clone', art: <>{stack}<path d="M8 9h4v3H8z" fill="#fff" stroke="#222" /><path d="M9 7c0-2 3-2 3 0" stroke="#222" /></> },
  null,
  { name: 'Group', art: <><path d="M4 5h8v7H4z" fill="#b9cbdc" stroke="#333" /><circle cx="9" cy="7" r="3" fill="#ccd9e4" stroke="#333" /><path d="M1 4V1h3M12 1h3v3M1 12v3h3M12 15h3v-3" stroke="#333" strokeWidth="1.500" /></> },
];

const snapMain = (
  <>
    <path d="m3 3 10 10" stroke="#335" strokeWidth="1.300" />
    <circle cx="4" cy="4" r="2.500" fill="#7d84ff" stroke="#2a30d8" />
    <path d="m7 6 4 1-1 4z" fill="#111" />
    <circle cx="12.500" cy="12.500" r="2" fill="#8fd09a" stroke="#2f8a42" />
  </>
);
const dotted = (d: string, dot: ReactNode) => (
  <>
    <path d={d} stroke="#888" strokeDasharray="1.500 1.500" strokeWidth="1.400" />
    {dot}
  </>
);
const node = (cx: number, cy: number) => <circle cx={cx} cy={cy} r="2" fill="#4aa45c" />;

const snaps: BarItem[] = [
  { name: 'Enable snapping', art: snapMain, on: true },
  null,
  { name: 'Snap bounding boxes', art: snapMain },
  { name: 'Snap to edges', art: dotted('M2 14h12V2', null) },
  { name: 'Snap to corners', art: dotted('M2 13h12V2', node(13, 13)) },
  { name: 'Snap edge midpoints', art: dotted('M2 13h11V4', node(13, 4)) },
  { name: 'Snap box centers', art: dotted('M2 13h12V2', node(5, 8)) },
  null,
  { name: 'Snap nodes', art: snapMain, on: true },
  { name: 'Snap to paths', art: <path d="M2 3c5-2 9 1 8 5l4 3c-4 0-5 2-10 2" stroke="#2c8f3e" strokeWidth="1.500" /> },
  { name: 'Snap to intersections', art: <><path d="M1 12 15 3M3 10h10M6 14l5-12" stroke="#667" />{node(8, 8)}</> },
  { name: 'Snap cusp nodes', art: <><path d="M3 3c6-1 9 1 9 5l2 3c-4-1-7 1-10 2" stroke="#667" />{node(11, 11)}</> },
  { name: 'Snap smooth nodes', art: <><path d="M2 3c8-1 8 3 10 7 0 3-3 4-6 4" stroke="#667" />{node(6, 5)}</> },
  { name: 'Snap line midpoints', art: <><path d="M3 13 13 3" stroke={red} strokeWidth="1.500" /><circle cx="4" cy="12" r="2" fill="#d83a3a" /><circle cx="12" cy="4" r="2" fill="#d83a3a" />{node(8, 8)}</> },
  null,
  { name: 'Snap others', art: snapMain, on: true },
  { name: 'Snap centers', art: <><path d="M2 14h12V3" stroke="#999" />{node(8, 8)}</> },
  { name: 'Snap rotation centers', art: <><path d="M6 4v8M2 8h8M13 4v9" stroke="#666" strokeWidth="1.300" /><path d="M1 14h13" stroke="#999" strokeDasharray="1 1" /></> },
  { name: 'Snap text baseline', art: <><text x="3" y="13" fontSize="14" fontWeight="900" fontStyle="italic" fontFamily="Lato" fill="#111">A</text>{node(3, 13)}</> },
  null,
  { name: 'Snap page border', art: <path d="M3.500 1.500h9v13h-9z" fill="#f2f2f2" stroke="#555" strokeWidth="1.500" /> },
  { name: 'Snap grids', art: <path d="M4 1v14M8 1v14M12 1v14M1 4h14M1 8h14M1 12h14" stroke="#1a28e8" strokeWidth="1.400" />, on: true },
  { name: 'Snap guides', art: <path d="M2 1v14M14 1v14M5 14l6-12" stroke="#2636ea" strokeWidth="1.400" />, on: true },
];

function IconBar({ items, width }: { items: BarItem[]; width: string }) {
  return (
    <div className={`flex shrink-0 flex-col items-center bg-white pt-px ${width}`}>
      {items.map((it, i) =>
        it ? (
          <button
            key={i}
            aria-label={it.name}
            className={`flex size-[17px] shrink-0 items-center justify-center ${
              it.on ? 'border border-[#a6d6fb] bg-[#cce8ff]' : ''
            }`}
          >
            <Svg size="size-3">{it.art}</Svg>
          </button>
        ) : (
          <div key={i} className="flex h-2 shrink-0 items-center">
            <div className="h-px w-2.5 bg-[#aaa]" />
          </div>
        ),
      )}
      {items === commands && (
        <div className="mb-1 mt-auto flex">
          <More />
        </div>
      )}
    </div>
  );
}

/* ---------- palette and status ---------- */

const swatches = (
  '000000 1a1a1a 333333 4d4d4d 666666 808080 999999 b3b3b3 cccccc e6e6e6 ececec f2f2f2 f9f9f9 ffffff ' +
  '800000 ff0000 808000 ffff00 008000 00ff00 008080 00ffff 000080 0000ff 800080 ff00ff ' +
  '2b0000 550000 800000 aa0000 d40000 ff0000 ff2a2a ff5555 ff8080 ffaaaa ffd5d5 ' +
  '280b0b 501616 782121 a02c2c c83737 d35f5f de8787 e9afaf f4d7d7 ' +
  '241c1c 483737 6c5353 916f6f ac9393 c8b7b7 e3dbdb ' +
  '2b1100 552200 803300 aa4400 d45500 ff6600 ff7f2a ff9955 ffb380 ffccaa ffe6d5 ' +
  '28170b 502d16 784421 a05a2c c87137 d38d5f deaa87 e9c6af f4e3d7 ' +
  '241f1c 483e37 6c5d53 917c6f ac9d93 c8beb7 e3dedb ' +
  '2b2200 554400 806600 aa8800 d4aa00 ffcc00 ffd42a ffdd55 ffe680 ffeeaa fff6d5 ' +
  '28220b 504416 786721 a08a2c c8ab37'
).split(' ');

function Palette() {
  return (
    <div className="shrink-0 border-t border-[#999] pt-px">
      <div className="flex h-[10px]">
        <button aria-label="No color" className="w-[11px] bg-white">
          <svg viewBox="0 0 11 10" className="h-full w-full">
            <path d="m1 1 9 8M10 1 1 9" stroke="#a01010" strokeWidth="1.400" />
            <path d="M.5.5h10v9H.5z" fill="none" stroke="#333" />
          </svg>
        </button>
        {swatches.map((c, i) => (
          <button key={i} aria-label={`#${c}`} className="min-w-0 flex-1" style={{ backgroundColor: `#${c}` }} />
        ))}
        <button aria-label="Palette menu" className="flex w-[7px] justify-center pt-px">
          <svg viewBox="0 0 3 4" className="h-1 w-[3px]"><path d="M3 0v4L0 2z" /></svg>
        </button>
      </div>
      <div className="flex h-[11px] items-center pl-px pr-2 pt-px">
        <Chevron d={LEFT} />
        <div className="flex-1 pl-0.5">
          <div className="h-[9px] w-[194px] bg-[#cdcdcd]" />
        </div>
        <Chevron d={RIGHT} />
      </div>
    </div>
  );
}

function StatusBar() {
  return (
    <footer className="flex h-[19px] shrink-0 items-center">
      <div className="grid w-20 shrink-0 grid-cols-[26px_7px_1fr] pl-px leading-[9px]">
        <span>Fill:</span>
        <b>m</b>
        <span className="bg-[#f00]" />
        <span>Stroke:</span>
        <b>m</b>
        <i className="text-center">None</i>
      </div>
      <div className="w-0.5" />
      <Spin label="_O:" value="0" width="w-[31px]" />
      <div className="mx-px h-full w-px bg-[#bbb]" />
      <button aria-label="Toggle visibility" className="ml-0.5">
        <Svg size="size-2">
          <path d="M1 8c4-6 10-6 14 0-4 6-10 6-14 0z" fill="#ccc" stroke="#333" strokeWidth="1.500" />
          <circle cx="8" cy="8" r="3.500" fill="#222" />
        </Svg>
      </button>
      <button aria-label="Toggle lock">
        <Svg size="size-2.5">{padlock}</Svg>
      </button>
      <Combo label="Layer" value="-Layer 1" className="h-[18px] w-[45px] font-bold" />
      <span className="ml-1 flex-1">Combine several paths into one</span>
      <dl className="grid grid-cols-[14px_29px] border-l border-dotted border-[#aaa] pl-0.5 font-['Liberation_Mono'] leading-[9px]">
        <dt>X:</dt>
        <dd className="text-right">10.10</dd>
        <dt>Y:</dt>
        <dd className="text-right">869.74</dd>
      </dl>
      <div className="w-1" />
      <Spin label="_Z:" value="  99%" width="w-9" />
      <div className="w-3" />
    </footer>
  );
}

/* ---------- taskbar ---------- */

const firefox = (
  <>
    <circle cx="8" cy="8" r="7.500" fill="#e86c10" />
    <circle cx="7.500" cy="7" r="4.800" fill="#2a66b0" />
    <path d="M1 5c0 5 3 5 5 5 1-2 3-1 4-2-3-1-4-3-3-5-3-1-5 0-6 2z" fill="#f5931c" />
    <path d="M13 3c3 5 1 10-4 12 3-2 5-6 4-12z" fill="#f9c21c" />
  </>
);

const apps: { name: string; art: ReactNode; open?: boolean; active?: boolean }[] = [
  { name: 'Task view', art: <path d="M4.500 3.500h7v9h-7zM2.500 4.500h-2v7h2M13.500 4.500h2v7h-2" stroke="#eee" /> },
  { name: 'File Explorer', open: true, art: <><path d="M1 2h5l1 2h8v11H1z" fill="#f5d77a" /><path d="M1 6h14v9H1z" fill="#fbe8a5" /><path d="M3 9h10v6h-3v-3H6v3H3z" fill="#3fa4e0" /></> },
  { name: 'Firefox', art: firefox },
  { name: 'Chrome', open: true, art: <><circle cx="8" cy="8" r="7.500" fill="#dd4b3e" /><path d="M1.500 4.500A7.500 7.500 0 0 0 8 15.500l3.500-6L8 8z" fill="#1fa15d" /><path d="M8 15.500A7.500 7.500 0 0 0 14.700 4.700H8L11.200 10z" fill="#fdcd40" /><circle cx="8" cy="8" r="3.500" fill="#fff" /><circle cx="8" cy="8" r="2.700" fill="#4a8af4" /></> },
  { name: 'Spotify', art: <><circle cx="8" cy="8" r="7.800" fill="#1ed760" /><path d="M3.500 5.500c3-1 6.500-.8 9.300.8M4 8.300c2.600-.8 5.500-.6 7.900.8M4.500 10.900c2.200-.6 4.300-.4 6.300.8" stroke="#0b1a10" strokeWidth="1.300" strokeLinecap="round" /></> },
  { name: 'iTunes', art: <><circle cx="8" cy="8" r="7.500" fill="#fff" stroke="#d8a8d8" /><path d="M6 11V4.500l5-1V10" stroke="#d14a94" strokeWidth="1.300" /><circle cx="5" cy="11" r="1.600" fill="#5b6be0" /><circle cx="10" cy="10" r="1.600" fill="#e0486a" /></> },
  { name: 'Media Player', art: <><path d="M1 2h10v12H1zM5 3h10v12H5z" fill="#79aede" /><circle cx="7.500" cy="8" r="5" fill="#ee7a1c" /><path d="M6 5v6l4.500-3z" fill="#fff" /></> },
  { name: 'Rhinoceros', art: <><path d="M0 0h16v9H0z" fill="#4a4d50" /><path d="M0 5c4 1 6-1 8 2l3 1 4-4c0 5-1 6-4 7l-3 5-5-1 1-4z" fill="#e8e8e8" /></> },
  { name: 'Player', art: <><path d="M1 2 15 1v14H1z" fill="#f4e211" /><path d="m4 4 8 4-8 4z" fill="#249c28" /></> },
  { name: 'Camera', art: <><path d="M0 0h16v16H0z" fill="#fff" /><path d="M3 6c2-4 8-4 10 0M3 10c2 4 8 4 10 0" stroke="#111" strokeWidth="2" /><circle cx="8" cy="8" r="2.500" fill="#e0202a" /><path d="M0 8h4M12 8h4" stroke="#111" strokeWidth="2.500" /></> },
  { name: 'Notes', art: <><path d="m2 2 11-1 1 12-11 2z" fill="#f2f2ee" /><path d="M3 2h10" stroke="#888" strokeWidth="1.500" strokeDasharray="1 1" /><path d="M5 6h6M5 9h5" stroke="#aaa" /><path d="m7 13 7-8 2 1-7 8z" fill="#ef9a35" /></> },
  { name: 'Processing', art: <><path d="M0 1h16v14H0z" fill="#0d1d35" /><text x="4" y="13" fontSize="13" fontWeight="700" fontFamily="Liberation Serif" fill="#fff">P</text></> },
  { name: 'Arduino', art: <><circle cx="8" cy="8" r="7.500" fill="#00979c" /><circle cx="5.300" cy="8" r="2.100" stroke="#fff" strokeWidth="1.300" /><circle cx="10.700" cy="8" r="2.100" stroke="#fff" strokeWidth="1.300" /></> },
  { name: 'CCS', art: <><path d="M0 0h16v16H0z" fill="#fff" /><path d="M9 2C3 1 3 8 8 9" stroke="#d4122e" strokeWidth="3" /><text x="8" y="9" fontSize="5" fontFamily="Liberation Sans" fill="#c01">CS</text><path d="M2 13h12" stroke="#222" strokeWidth="2" strokeDasharray="2 .5" /></> },
  { name: 'Word', art: <><path d="M7 2h8v12H7z" fill="#fff" stroke="#2b579a" /><path d="M9 5h5M9 8h5M9 11h5" stroke="#2b579a" /><path d="m0 2 9-1v14l-9-1z" fill="#2b579a" /><text x="1" y="11" fontSize="8" fontWeight="700" fontFamily="Liberation Sans" fill="#fff">W</text></> },
  { name: 'Circuit', art: <><path d="M1 2h14v12H1z" fill="#d8c8c8" /><path d="M2 4h12v8H2z" fill="#8d2033" /><path d="M4 6h3v4H4zM9 6h4M9 8h4M9 10h4" stroke="#f0dede" /></> },
  { name: 'uTorrent', art: <><circle cx="8" cy="8" r="7.500" fill="#7cc242" /><path d="M4.500 4v5c0 3 5 3 6 0V4M10.500 9c0 2 1 2 2.500 2" stroke="#fff" strokeWidth="2.200" /></> },
  { name: 'Firefox window', open: true, art: firefox },
  { name: 'GIMP', open: true, art: <><path d="m1 6 4 1 3-1 4-3 1 5c0 4-7 6-10 2z" fill="#8d8778" /><circle cx="7" cy="7" r="1.500" fill="#fff" /><circle cx="10" cy="7" r="1.300" fill="#fff" /><path d="m9 11 6 2" stroke="#d98b2b" strokeWidth="1.500" /></> },
  { name: 'Inkscape', open: true, active: true, art: <><path d="m8 1 7 7c1 2-2 2-4 3l1 2-4 2-3-2 1-2C3 10 0 10 1 8z" fill="#10151c" stroke="#999" strokeWidth=".6" /><path d="m8 1.500 4 4-2 1-2-1-2 2-2-2z" fill="#e8eef4" /></> },
];

function Taskbar() {
  return (
    <div className="flex h-[26px] shrink-0 items-stretch bg-[#03060c] text-white">
      <button aria-label="Start" className="flex w-8 items-center justify-center">
        <svg viewBox="0 0 12 12" className="size-3" fill="#fff">
          <path d="m0 2 5-.8v4.500H0zM5.700 1 12 0v5.700H5.700zM0 6.400h5V11l-5-.8zM5.700 6.400H12V12l-6.300-1z" />
        </svg>
      </button>
      <input
        aria-label="Pesquisar"
        placeholder="Pesquisar na Web e no Windows"
        className="w-[226px] bg-[#323334] pl-[7px] text-[10px] outline-none placeholder:text-[#a8a8a8]"
      />
      <div className="flex min-w-0 flex-1 pl-0.5">
        {apps.map((a) => (
          <button
            key={a.name}
            aria-label={a.name}
            className={`flex min-w-0 flex-1 flex-col items-center ${a.active ? 'bg-[#34383d]' : ''}`}
          >
            <span className="flex flex-1 items-center">
              <Svg size="size-[15px]">{a.art}</Svg>
            </span>
            <span className={`h-px w-5 ${a.open ? 'bg-[#c8ccd0]' : ''}`} />
          </button>
        ))}
      </div>
      <div className="flex items-center gap-[5px] pl-1">
        <svg viewBox="0 0 8 8" className="size-2.5" fill="none" stroke="#fff"><path d="m1 6 3-3 3 3" /></svg>
        <svg viewBox="0 0 12 10" className="h-[9px] w-[11px]" fill="none" stroke="#fff"><path d="M3.500 3.500h8v5h-8zM.5 1v3h3M2 1v3M2 5v3" /></svg>
        <svg viewBox="0 0 12 11" className="h-[11px] w-3"><path d="M1 0h11v8H8l-2 3V8H1z" fill="#fff" /><path d="M3 3h7M3 5h7" stroke="#333" /></svg>
      </div>
      <div className="flex w-14 flex-col items-center justify-center text-[8px] leading-3">
        <span>15:34</span>
        <span>11/02/2016</span>
      </div>
      <div className="my-px mr-0.5 w-px bg-[#333]" />
    </div>
  );
}

export default function App() {
  return (
    <div className="flex h-screen flex-col overflow-hidden bg-[#f0f0f0] font-[Lato,sans-serif] text-[8px] leading-[11px] text-[#111]">
      <div className="shrink-0 bg-white">
        <div className="flex h-[15px] items-center">
          <span className="ml-0.5 mr-[3px]">
            <Svg size="size-2.5">
              <path d="m8 0 8 8-4 3 1 3-5 2-5-2 1-3-4-3z" fill="#222a33" />
              <path d="m8 2 3 3-3 1-3-1z" fill="#dfe6ec" />
            </Svg>
          </span>
          <h1 className="flex-1">*Laser_test.svg - Inkscape</h1>
          <div className="flex gap-[22px] pr-3">
            <button aria-label="Minimize"><Svg size="size-2" box={8}><path d="M1 4.500h6" stroke="#777" /></Svg></button>
            <button aria-label="Restore"><Svg size="size-2" box={8}><path d="M.5 2.500h5v5h-5zM2.500 2V.5h5v5H6" stroke="#222" /></Svg></button>
            <button aria-label="Close window"><Svg size="size-2" box={8}><path d="m.5.5 7 7M7.500.5l-7 7" stroke="#222" /></Svg></button>
          </div>
        </div>
        <MenuBar />
        <ControlsBar />
      </div>
      <div className="flex min-h-0 flex-1">
        <Toolbox />
        <Desk />
        <div className="w-[5px] shrink-0" />
        <Dock />
        <DockSide />
        <IconBar items={commands} width="w-[21px]" />
        <IconBar items={snaps} width="w-5" />
      </div>
      <Palette />
      <StatusBar />
      <Taskbar />
    </div>
  );
}
